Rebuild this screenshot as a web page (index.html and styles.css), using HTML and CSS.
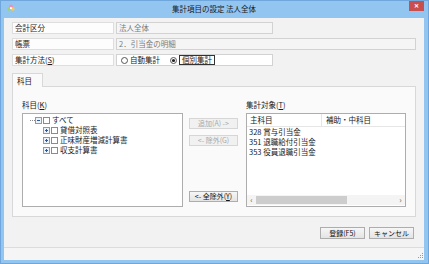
FILE: index.html
```html
<!DOCTYPE html>
<html lang="ja">

<head>
    <meta charset="UTF-8" />
    <title>集計項目の設定 法人全体</title>
    <link rel="stylesheet" href="styles.css">
</head>

<body>
    <div class="window">
        <div class="titlebar">
            <span class="app-icon">
                <svg width="8" height="8" viewBox="0 0 8 8">
                    <circle cx="4" cy="2.2" r="1.8" fill="#f28cb4" />
                    <circle cx="2.2" cy="5" r="1.8" fill="#9fd36a" />
                    <circle cx="5.8" cy="5" r="1.8" fill="#f5c85a" />
                    <circle cx="4" cy="4.2" r="1.1" fill="#fff" />
                </svg>
            </span>
            <span class="title">集計項目の設定 法人全体</span>
            <span class="close">✕</span>
        </div>

        <div class="client">
            <div class="fields">
                <div class="field-label">会計区分</div>
                <div class="field-value">法人全体</div>
                <div class="field-label">帳票</div>
                <div class="field-value wide">2．引当金の明細</div>
                <div class="field-label">集計方法(<u>S</u>)</div>
                <div class="field-radio">
                    <svg class="radio" width="7" height="7" viewBox="0 0 7 7">
                        <circle cx="3.5" cy="3.5" r="3" fill="#fff" stroke="#555" />
                    </svg>
                    <span>自動集計</span>
                    <svg class="radio second" width="7" height="7" viewBox="0 0 7 7">
                        <circle cx="3.5" cy="3.5" r="3" fill="#fff" stroke="#555" />
                        <circle cx="3.5" cy="3.5" r="1.6" fill="#222" />
                    </svg>
                    <span class="focused">個別集計</span>
                </div>
            </div>

            <div class="tabs">
                <div class="tab">科目</div>
            </div>

            <div class="panel">
                <div class="col-tree">
                    <div class="col-label">科目(<u>K</u>)</div>
                    <div class="tree">
                        <div class="tree-row">
                            <span class="connector"></span>
                            <svg class="expander" width="7" height="7" viewBox="0 0 7 7">
                                <rect x=".5" y=".5" width="6" height="6" fill="#eef3fa" stroke="#7e9dc8" />
                                <path d="M2 3.5h3" stroke="#2a5aa6" />
                            </svg>
                            <span class="check"></span>
                            <span>すべて</span>
                        </div>
                        <div class="tree-row child">
                            <svg class="expander" width="7" height="7" viewBox="0 0 7 7">
                                <rect x=".5" y=".5" width="6" height="6" fill="#eef3fa" stroke="#7e9dc8" />
                                <path d="M2 3.5h3M3.5 2v3" stroke="#2a5aa6" />
                            </svg>
                            <span class="check"></span>
                            <span>貸借対照表</span>
                        </div>
                        <div class="tree-row child">
                            <svg class="expander" width="7" height="7" viewBox="0 0 7 7">
                                <rect x=".5" y=".5" width="6" height="6" fill="#eef3fa" stroke="#7e9dc8" />
                                <path d="M2 3.5h3M3.5 2v3" stroke="#2a5aa6" />
                            </svg>
                            <span class="check"></span>
                            <span>正味財産増減計算書</span>
                        </div>
                        <div class="tree-row child">
                            <svg class="expander" width="7" height="7" viewBox="0 0 7 7">
                                <rect x=".5" y=".5" width="6" height="6" fill="#eef3fa" stroke="#7e9dc8" />
                                <path d="M2 3.5h3M3.5 2v3" stroke="#2a5aa6" />
                            </svg>
                            <span class="check"></span>
                            <span>収支計算書</span>
                        </div>
                    </div>
                </div>

                <div class="col-buttons">
                    <button class="btn" disabled>追加(A) -&gt;</button>
                    <button class="btn" disabled>&lt;- 除外(G)</button>
                    <button class="btn last">&lt;- 全除外(<u>Y</u>)</button>
                </div>

                <div class="col-list">
                    <div class="col-label">集計対象(<u>T</u>)</div>
                    <div class="list">
                        <div class="list-head">
                            <span class="head-main">主科目</span>
                            <span class="head-sub">補助・中科目</span>
                        </div>
                        <div class="list-body">
                            <div class="list-row">328 賞与引当金</div>
                            <div class="list-row">351 退職給付引当金</div>
                            <div class="list-row">353 役員退職引当金</div>
                        </div>
                        <div class="hscroll">
                            <span class="arrow">&lsaquo;</span>
                            <span class="track"><span class="thumb"></span></span>
                            <span class="arrow">&rsaquo;</span>
                        </div>
                    </div>
                </div>
            </div>

            <div class="actions">
                <button class="btn wide">登録(F5)</button>
                <button class="btn wide">キャンセル</button>
            </div>

            <div class="statusbar">
                <svg class="grip" width="7" height="7" viewBox="0 0 7 7">
                    <rect x="5" y="1" width="1" height="1" fill="#9a9a9a" />
                    <rect x="3" y="3" width="1" height="1" fill="#9a9a9a" />
                    <rect x="5" y="3" width="1" height="1" fill="#9a9a9a" />
                    <rect x="1" y="5" width="1" height="1" fill="#9a9a9a" />
                    <rect x="3" y="5" width="1" height="1" fill="#9a9a9a" />
                    <rect x="5" y="5" width="1" height="1" fill="#9a9a9a" />
                </svg>
            </div>
        </div>
    </div>
</body>

</html>
```

FILE: styles.css
```css
body {
    margin: 0;
    font-family: "Noto Sans CJK JP", "Noto Sans", sans-serif;
    font-size: 7.5px;
    color: #1a1a1a;
}

u {
    text-decoration: underline;
}

.window {
    width: 429px;
    height: 264px;
    box-sizing: border-box;
    background: #93c5f1;
    border: 1px solid #6fa7dc;
    padding: 0 4px 3px 3px;
    display: flex;
    flex-direction: column;
}

.titlebar {
    height: 17px;
    display: grid;
    grid-template-columns: 1fr auto 1fr;
    align-items: center;
}

.app-icon {
    display: flex;
    padding-left: 3px;
    padding-bottom: 3px;
}

.title {
    line-height: 10px;
    padding-bottom: 2px;
}

.close {
    justify-self: end;
    align-self: start;
    width: 15px;
    height: 10px;
    background: #c94f4f;
    color: #fff;
    font-size: 6px;
    line-height: 10px;
    text-align: center;
    font-weight: bold;
}

.client {
    flex: 1;
    background: #f2f2f2;
    padding: 4px 8px 0;
    display: flex;
    flex-direction: column;
}

.fields {
    display: grid;
    grid-template-columns: 102px 157px 1fr;
    grid-auto-rows: 12px;
    column-gap: 2px;
    row-gap: 4px;
}

.field-label,
.field-value,
.field-radio {
    box-sizing: border-box;
    line-height: 10px;
    padding-left: 2px;
}

.field-label {
    grid-column: 1;
    background: #fdfdfd;
    border: 1px solid #dedede;
}

.field-value {
    background: #f5f5f5;
    border: 1px solid #d2d2d2;
    color: #7a7a7a;
}

.field-value.wide {
    grid-column: 2 / 4;
}

.field-radio {
    background: #fff;
    border: 1px solid #d2d2d2;
    display: flex;
    align-items: center;
    padding-left: 4px;
}

.radio {
    margin-right: 2px;
}

.radio.second {
    margin-left: 10px;
}

.focused {
    border: 1px solid #333;
    line-height: 8px;
    padding: 0 2px;
}

.tabs {
    margin-top: 7px;
    display: flex;
}

.tab {
    width: 31px;
    height: 14px;
    box-sizing: border-box;
    border: 1px solid #d8d8d8;
    border-bottom: none;
    background: #fafafa;
    line-height: 13px;
    padding-left: 4px;
    margin-bottom: -1px;
    position: relative;
}

.panel {
    height: 131px;
    box-sizing: border-box;
    border: 1px solid #d8d8d8;
    background: #fafafa;
    padding: 12px 9px 9px;
    display: flex;
}

.col-label {
    height: 12px;
    line-height: 12px;
    margin-bottom: 2px;
}

.col-tree {
    width: 161px;
    display: flex;
    flex-direction: column;
}

.tree {
    flex: 1;
    background: #fff;
    border: 1px solid #adadad;
    padding-top: 1px;
    padding-left: 7px;
}

.tree-row {
    height: 10px;
    line-height: 10px;
    display: flex;
    align-items: center;
}

.tree-row.child {
    padding-left: 13px;
}

.connector {
    width: 5px;
    border-top: 1px dotted #8a8a8a;
}

.check {
    width: 5px;
    height: 5px;
    border: 1px solid #8b8b8b;
    background: #fff;
    margin: 0 2px 0 1px;
}

.col-buttons {
    width: 49px;
    margin: 0 8px 0 6px;
    display: flex;
    flex-direction: column;
    gap: 6px;
    padding-top: 19px;
}

.btn {
    font-family: inherit;
    font-size: 7px;
    height: 11px;
    line-height: 9px;
    padding: 0;
    box-sizing: border-box;
    background: linear-gradient(#f6f6f6, #e4e4e4);
    border: 1px solid #adadad;
    color: #111;
    white-space: nowrap;
}

.btn:disabled {
    background: #f1f1f1;
    border-color: #d6d6d6;
    color: #a8a8a8;
}

.btn.last {
    margin-top: auto;
    margin-bottom: 5px;
}

.col-list {
    width: 160px;
    display: flex;
    flex-direction: column;
}

.list {
    flex: 1;
    background: #fff;
    border: 1px solid #adadad;
    display: flex;
    flex-direction: column;
}

.list-head {
    height: 12px;
    line-height: 12px;
    display: flex;
    border-bottom: 1px solid #e6e6e6;
}

.head-main {
    width: 71px;
    padding-left: 3px;
    border-right: 1px solid #e6e6e6;
}

.head-sub {
    padding-left: 4px;
}

.list-body {
    flex: 1;
}

.list-row {
    height: 10px;
    line-height: 10px;
    padding-left: 2px;
}

.hscroll {
    height: 10px;
    display: flex;
    align-items: center;
    background: #f4f4f4;
    color: #606060;
    margin-bottom: 1px;
}

.arrow {
    width: 9px;
    text-align: center;
    line-height: 10px;
    font-size: 8px;
}

.track {
    flex: 1;
    height: 8px;
    display: flex;
}

.thumb {
    width: 91px;
    background: #cdcdcd;
}

.actions {
    margin-top: 10px;
    display: flex;
    justify-content: flex-end;
    gap: 4px;
    padding-right: 2px;
}

.btn.wide {
    width: 45px;
    height: 12px;
    line-height: 10px;
}

.statusbar {
    margin: auto -8px 0;
    height: 13px;
    box-sizing: border-box;
    border-top: 1px solid #dcdcdc;
    background: #f5f5f5;
    display: flex;
    justify-content: flex-end;
    align-items: flex-end;
}

.grip {
    margin: 0 0 1px;
}
```
